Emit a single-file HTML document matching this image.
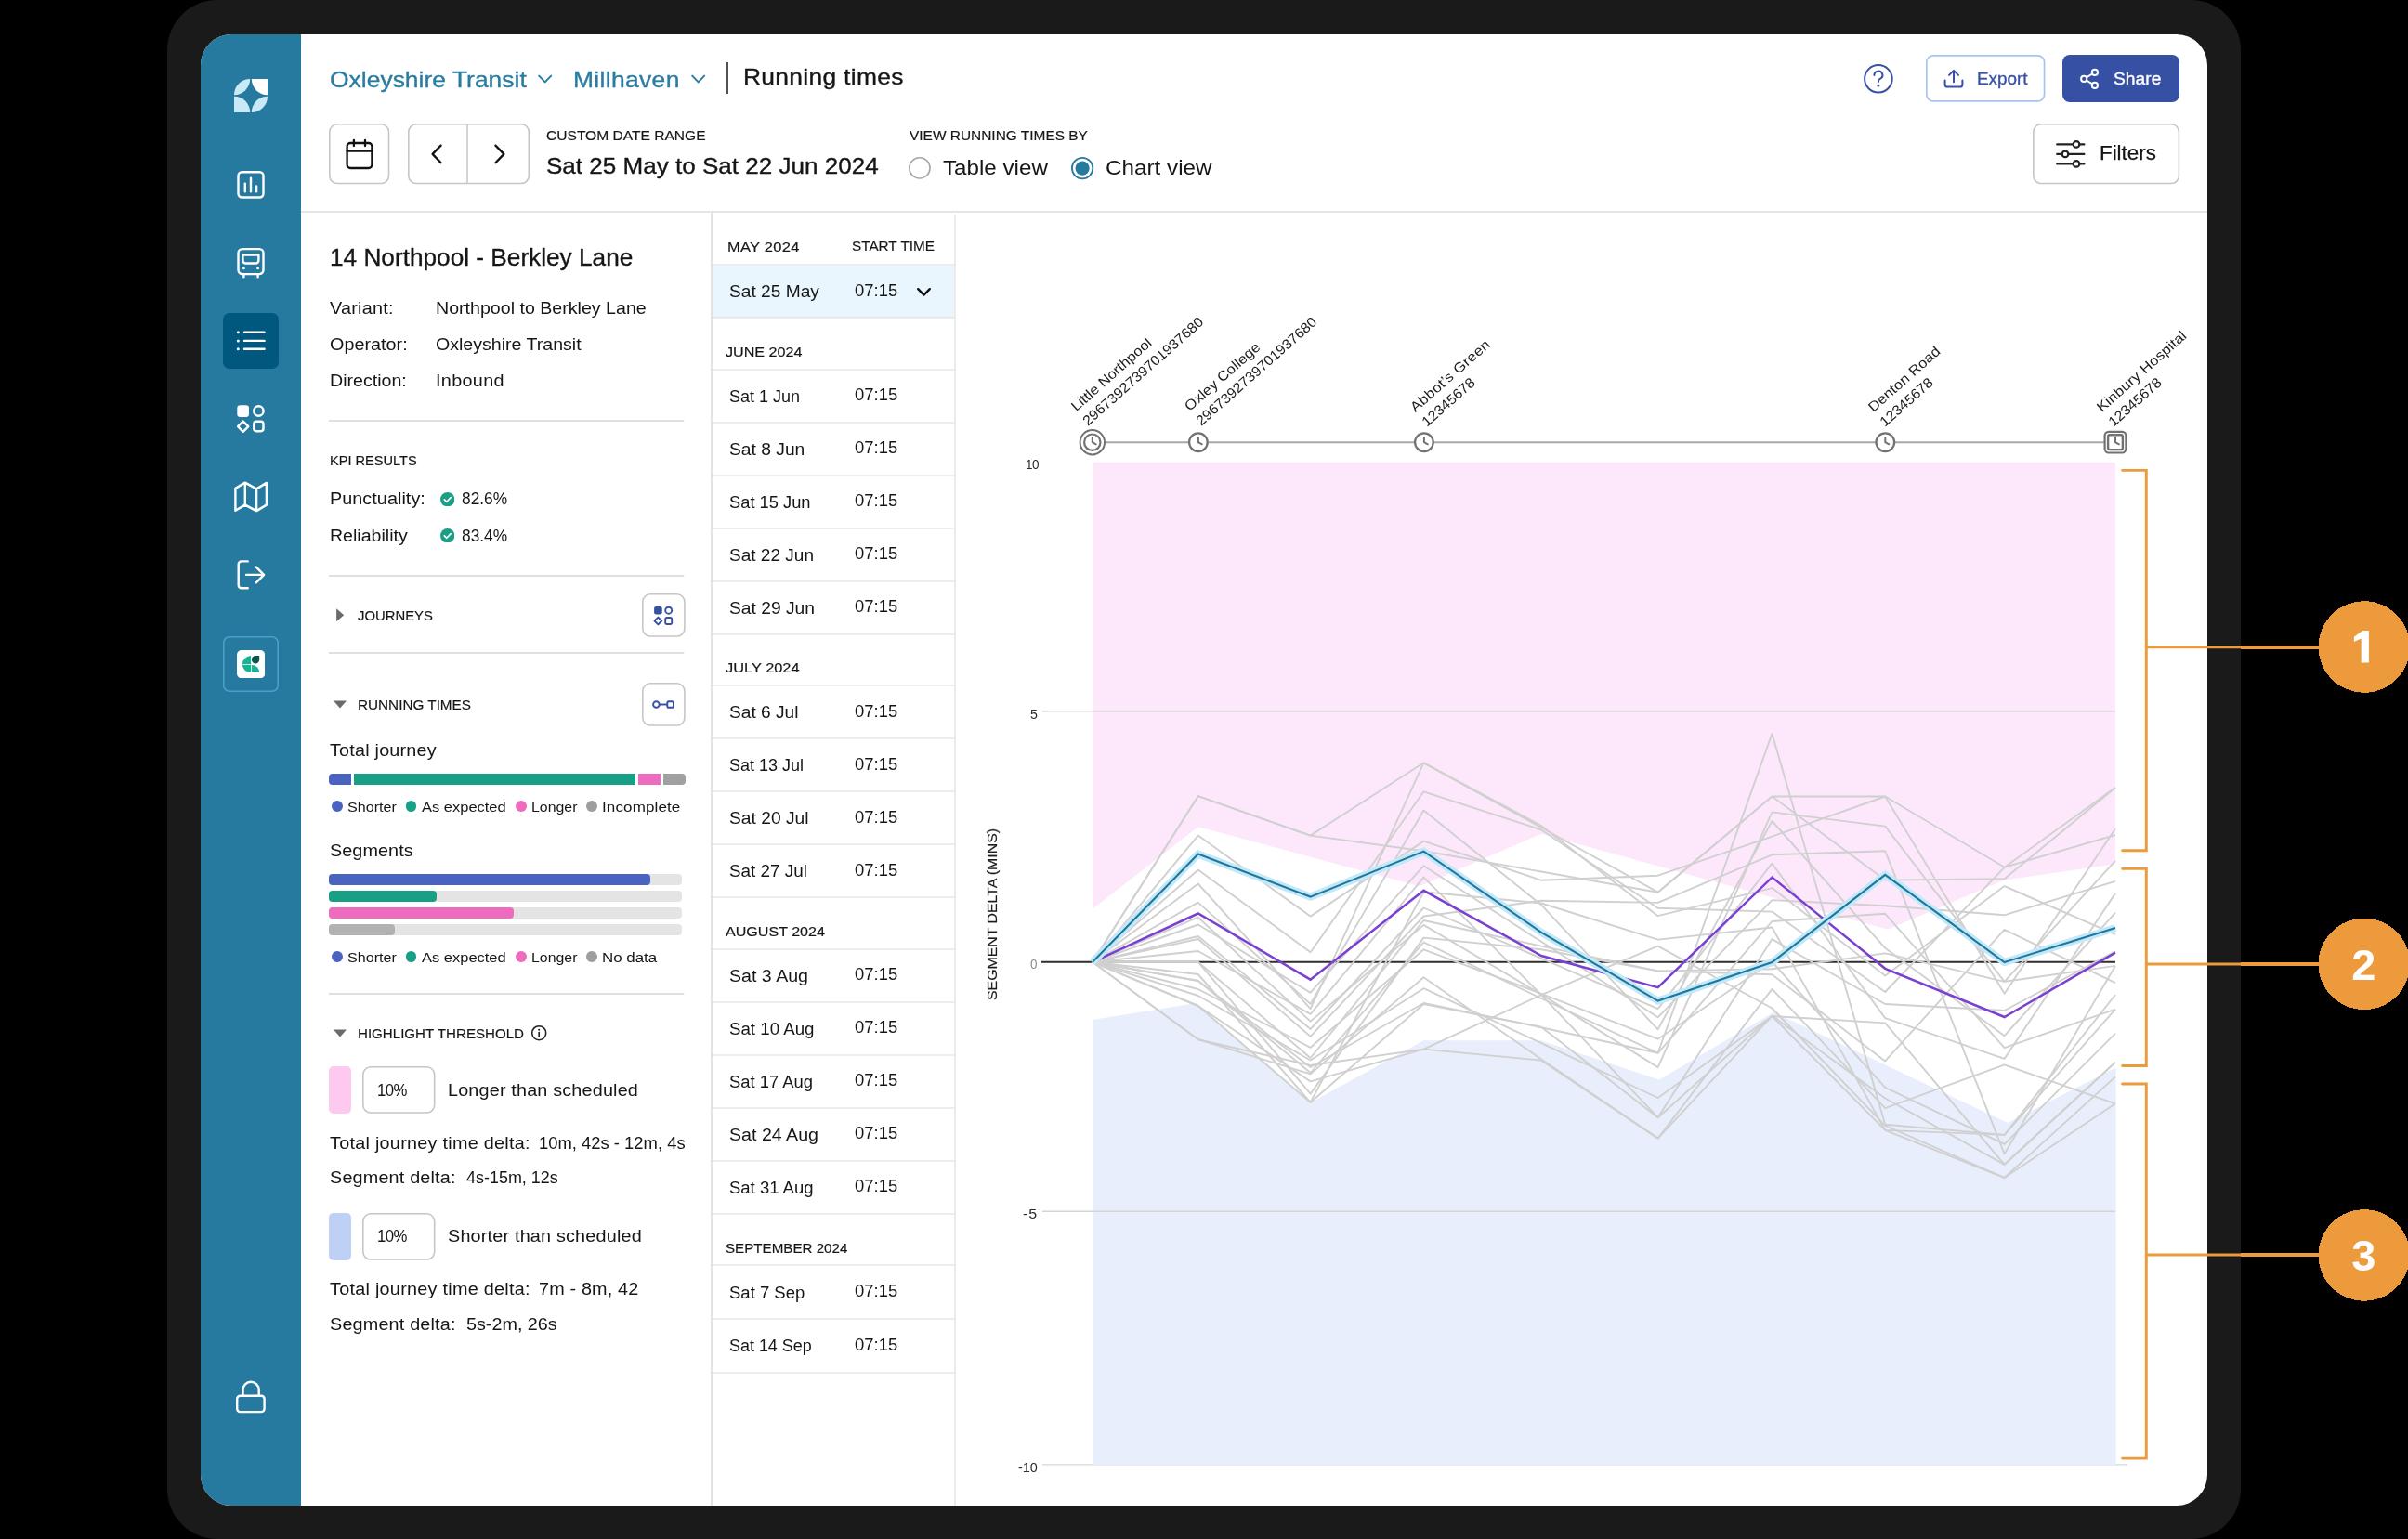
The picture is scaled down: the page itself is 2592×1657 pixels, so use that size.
<!DOCTYPE html>
<html><head><meta charset="utf-8"><title>Running times</title>
<style>
html,body{margin:0;padding:0;}
body{width:2592px;height:1657px;background:#000;position:relative;overflow:hidden;font-family:"Liberation Sans",sans-serif;}
.b{position:absolute;box-sizing:border-box;}
.t{position:absolute;white-space:nowrap;transform-origin:0 50%;}
#frame{position:absolute;left:180px;top:0;width:2231.5px;height:1657px;background:#1a1a1a;border-radius:54px;}
#screen{position:absolute;left:216px;top:36.5px;width:2160px;height:1584.3px;background:#fff;border-radius:33px;overflow:hidden;}
#pg{position:absolute;left:-216px;top:-36.5px;width:2592px;height:1657px;will-change:transform;}
#anno{position:absolute;left:0;top:0;width:2592px;height:1657px;}
</style></head><body>
<div id="frame"></div>
<div id="screen"><div id="pg">

<div class="b" style="left:216.00px;top:36.00px;width:108.00px;height:1586.00px;background:#277a9f;"></div>
<svg class="b" style="left:252.00px;top:85.00px;" width="36" height="36" viewBox="0 0 36 36">
<path d="M0 17.2 A17.2 17.2 0 0 1 17.2 0 A17.2 17.2 0 0 1 0 17.2Z" fill="#c8e9f8"/>
<path d="M18.8 0 H36 V17.2 A17.2 17.2 0 0 1 18.8 0Z" fill="#ffffff"/>
<path d="M0 18.8 A17.2 17.2 0 0 1 17.2 36 H0Z" fill="#c8e9f8"/>
<path d="M36 18.8 A17.2 17.2 0 0 1 18.8 36 A17.2 17.2 0 0 1 36 18.8Z" fill="#c8e9f8"/>
</svg>
<svg class="b" style="left:250.00px;top:180.00px;" width="40" height="40" viewBox="0 0 40 40">
<rect x="6.5" y="5.3" width="27" height="27.2" rx="4" stroke="#fff" fill="none" stroke-width="2.4" stroke-linecap="round" stroke-linejoin="round"/>
<path d="M13.8 17.6V26.2 M20 11.6V26.2 M26.1 20.5V26.2" stroke="#fff" fill="none" stroke-width="2.4" stroke-linecap="round" stroke-linejoin="round"/>
</svg>
<svg class="b" style="left:250.00px;top:262.00px;" width="40" height="42" viewBox="0 0 40 42">
<rect x="6.5" y="6.1" width="27" height="27" rx="4.5" stroke="#fff" fill="none" stroke-width="2.4" stroke-linecap="round" stroke-linejoin="round"/>
<path d="M11.4 12.5H28.4V18.5A3 3 0 0 1 25.4 21.5H14.4A3 3 0 0 1 11.4 18.5Z" stroke="#fff" fill="none" stroke-width="2.4" stroke-linecap="round" stroke-linejoin="round"/>
<path d="M12.4 33.5V36.2 M27.6 33.5V36.2" stroke="#fff" fill="none" stroke-width="2.4" stroke-linecap="round" stroke-linejoin="round"/>
<circle cx="12.4" cy="26.9" r="1.4" fill="#fff"/><circle cx="27.6" cy="26.9" r="1.4" fill="#fff"/>
</svg>
<div class="b" style="left:240.10px;top:336.80px;width:60.00px;height:60.20px;background:#00587f;border-radius:7px;"></div>
<svg class="b" style="left:250.00px;top:346.00px;" width="40" height="40" viewBox="0 0 40 40">
<path d="M13 11.8H34.6 M13 20.9H34.6 M13 29.8H34.6" stroke="#fff" fill="none" stroke-width="2.4" stroke-linecap="round" stroke-linejoin="round"/>
<circle cx="6.3" cy="11.8" r="1.5" fill="#fff"/><circle cx="6.3" cy="20.9" r="1.5" fill="#fff"/><circle cx="6.3" cy="29.8" r="1.5" fill="#fff"/>
</svg>
<svg class="b" style="left:250.00px;top:431.00px;" width="40" height="40" viewBox="0 0 40 40">
<rect x="5.3" y="5.2" width="12.7" height="12.7" rx="3.2" fill="#fff"/>
<circle cx="28.4" cy="11.5" r="5.2" stroke="#fff" fill="none" stroke-width="2.4" stroke-linecap="round" stroke-linejoin="round"/>
<path d="M11.7 22.6L17.3 28.2L11.7 33.8L6.1 28.2Z" stroke="#fff" fill="none" stroke-width="2.4" stroke-linecap="round" stroke-linejoin="round"/>
<rect x="23.3" y="22.8" width="10.2" height="10.4" rx="2.6" stroke="#fff" fill="none" stroke-width="2.4" stroke-linecap="round" stroke-linejoin="round"/>
</svg>
<svg class="b" style="left:248.00px;top:514.00px;" width="44" height="42" viewBox="0 0 44 42">
<path d="M5.4 11.9L15.8 5.6L28.1 12.4L38.9 5.9V29.6L28.1 36.1L15.8 29.6L5.4 35.8Z M15.8 5.6V29.6 M28.1 12.4V36.1" stroke="#fff" fill="none" stroke-width="2.4" stroke-linecap="round" stroke-linejoin="round"/>
</svg>
<svg class="b" style="left:250.00px;top:599.00px;" width="40" height="40" viewBox="0 0 40 40">
<path d="M16.7 5.4H9.9A3.2 3.2 0 0 0 6.7 8.6V31.1A3.2 3.2 0 0 0 9.9 34.3H16.7" stroke="#fff" fill="none" stroke-width="2.4" stroke-linecap="round" stroke-linejoin="round"/>
<path d="M15.1 19.9H34 M25.8 11.6L34.1 19.9L25.8 28.3" stroke="#fff" fill="none" stroke-width="2.4" stroke-linecap="round" stroke-linejoin="round"/>
</svg>
<svg class="b" style="left:238.10px;top:683.00px;" width="64.00" height="64.00"><rect x="2.80" y="2.80" width="58.40" height="58.40" rx="6.20" fill="none" stroke="#4b9fc9" stroke-width="1.6"/></svg>
<svg class="b" style="left:255.00px;top:699.70px;" width="30.2" height="30.3" viewBox="0 0 30.2 30.3">
<rect x="0" y="0" width="30.2" height="30.3" rx="5" fill="#fff"/>
<path d="M15.1 6.1 V15.2 H5.9 A9.2 9.1 0 0 1 15.1 6.1Z" fill="#19b394"/>
<path d="M5.9 16.0 H15.1 V24 A9.2 8.4 0 0 1 5.9 16.0Z" fill="#19b394"/>
<path d="M15.9 16.0 A8.3 8.0 0 0 1 24.2 24 H15.9Z" fill="#19b394"/>
<path d="M24.2 6.1 V10.2 A4.15 4.15 0 1 1 20.05 6.1Z" fill="#075848"/>
</svg>
<svg class="b" style="left:250.00px;top:1482.00px;" width="40" height="44" viewBox="0 0 40 44">
<rect x="5.2" y="20.7" width="29.4" height="17.4" rx="3.4" stroke="#fff" fill="none" stroke-width="2.4" stroke-linecap="round" stroke-linejoin="round"/>
<path d="M11.5 20.7V14.4A8.6 8.6 0 0 1 28.7 14.4V20.7" stroke="#fff" fill="none" stroke-width="2.4" stroke-linecap="round" stroke-linejoin="round"/>
</svg>
<div class="t" style="left:354.90px;top:73.98px;font-size:24px;line-height:24px;color:#2a7ca1;-webkit-text-stroke:0.35px #2a7ca1;letter-spacing:0.027px;transform:scaleX(1.1000);">Oxleyshire Transit</div>
<svg class="b" style="left:576.00px;top:77.00px;" width="22" height="16" viewBox="0 0 22 16"><path d="M4.2 4.6L10.7 11.4L17.2 4.6" stroke="#2a7ca1" stroke-width="2" fill="none" stroke-linecap="round" stroke-linejoin="round"/></svg>
<div class="t" style="left:617.00px;top:73.98px;font-size:24px;line-height:24px;color:#2a7ca1;-webkit-text-stroke:0.35px #2a7ca1;letter-spacing:0.321px;transform:scaleX(1.1000);">Millhaven</div>
<svg class="b" style="left:741.00px;top:77.00px;" width="22" height="16" viewBox="0 0 22 16"><path d="M4.2 4.6L10.7 11.4L17.2 4.6" stroke="#2a7ca1" stroke-width="2" fill="none" stroke-linecap="round" stroke-linejoin="round"/></svg>
<svg class="b" style="left:780.50px;top:66.90px;" width="4" height="34.20"><path d="M2 0V34.20" stroke="#333" stroke-width="1.7"/></svg>
<div class="t" style="left:800.40px;top:71.48px;font-size:24px;line-height:24px;color:#161616;-webkit-text-stroke:0.35px #161616;letter-spacing:0.276px;transform:scaleX(1.1000);">Running times</div>
<svg class="b" style="left:2004.00px;top:67.00px;" width="36" height="36" viewBox="0 0 36 36">
<circle cx="17.9" cy="17.8" r="14.8" stroke="#3650a4" stroke-width="2" fill="none"/>
<path d="M13.4 13.9A4.5 4.3 0 1 1 19.6 17.9C18.3 18.6 17.9 19.3 17.9 20.9" stroke="#3650a4" stroke-width="2" fill="none" stroke-linecap="round"/>
<circle cx="17.9" cy="25.2" r="1.4" fill="#3650a4"/>
</svg>
<svg class="b" style="left:2071.30px;top:57.40px;" width="132.40" height="54.80"><rect x="2.85" y="2.85" width="126.70" height="49.10" rx="7.15" fill="#fff" stroke="#a6c3f1" stroke-width="1.7"/></svg>
<svg class="b" style="left:2090.00px;top:72.00px;" width="26" height="26" viewBox="0 0 26 26">
<path d="M3.6 14.6V18.9A2.6 2.6 0 0 0 6.2 21.5H19.8A2.6 2.6 0 0 0 22.4 18.9V14.6" stroke="#3650a4" stroke-width="2" fill="none" stroke-linecap="round" stroke-linejoin="round"/>
<path d="M13 16.2V4.2 M8 8.9L13 3.9L18 8.9" stroke="#3650a4" stroke-width="2" fill="none" stroke-linecap="round" stroke-linejoin="round"/>
</svg>
<div class="t" style="left:2128.40px;top:75.02px;font-size:19px;line-height:19px;color:#3650a4;-webkit-text-stroke:0.35px #3650a4;transform:scaleX(0.9943);">Export</div>
<div class="b" style="left:2220.00px;top:59.40px;width:126.20px;height:50.80px;background:#3650a4;border-radius:8px;"></div>
<svg class="b" style="left:2237.00px;top:72.00px;" width="26" height="26" viewBox="0 0 26 26">
<circle cx="17.9" cy="5.9" r="3.1" stroke="#fff" stroke-width="2" fill="none"/>
<circle cx="6.2" cy="12.9" r="3.1" stroke="#fff" stroke-width="2" fill="none"/>
<circle cx="17.9" cy="19.9" r="3.1" stroke="#fff" stroke-width="2" fill="none"/>
<path d="M8.9 11.3L15.2 7.5 M8.9 14.5L15.2 18.3" stroke="#fff" stroke-width="2" fill="none"/>
</svg>
<div class="t" style="left:2275.40px;top:75.02px;font-size:19px;line-height:19px;color:#fff;-webkit-text-stroke:0.35px #fff;transform:scaleX(1.0137);">Share</div>
<svg class="b" style="left:352.40px;top:131.20px;" width="69.30" height="69.30"><rect x="2.80" y="2.80" width="63.70" height="63.70" rx="8.20" fill="#fff" stroke="#c6c6c6" stroke-width="1.6"/></svg>
<svg class="b" style="left:370.00px;top:148.00px;" width="34" height="36" viewBox="0 0 34 36">
<rect x="3.6" y="6.0" width="26.8" height="27.0" rx="3.6" stroke="#111" stroke-width="2.3" fill="none"/>
<path d="M3.6 14.7H30.4 M10.9 2.9V9.0 M23.0 2.9V9.0" stroke="#111" stroke-width="2.3" fill="none" stroke-linecap="round"/>
</svg>
<svg class="b" style="left:436.60px;top:131.20px;" width="135.10" height="69.30"><rect x="2.80" y="2.80" width="129.50" height="63.70" rx="8.20" fill="#fff" stroke="#c6c6c6" stroke-width="1.6"/></svg>
<svg class="b" style="left:501.40px;top:134.00px;" width="4" height="63.70"><path d="M2 0V63.70" stroke="#c6c6c6" stroke-width="1.5"/></svg>
<svg class="b" style="left:458.00px;top:151.00px;" width="26" height="30" viewBox="0 0 26 30"><path d="M16.6 5.6L7.6 14.9L16.6 24.2" stroke="#111" stroke-width="2.3" fill="none" stroke-linecap="round" stroke-linejoin="round"/></svg>
<svg class="b" style="left:524.00px;top:151.00px;" width="26" height="30" viewBox="0 0 26 30"><path d="M9.4 5.6L18.4 14.9L9.4 24.2" stroke="#111" stroke-width="2.3" fill="none" stroke-linecap="round" stroke-linejoin="round"/></svg>
<div class="t" style="left:588.00px;top:138.40px;font-size:15px;line-height:15px;color:#161616;-webkit-text-stroke:0.18px #161616;transform:scaleX(1.0381);">CUSTOM DATE RANGE</div>
<div class="t" style="left:588.00px;top:166.68px;font-size:24px;line-height:24px;color:#161616;-webkit-text-stroke:0.35px #161616;transform:scaleX(1.0854);">Sat 25 May to Sat 22 Jun 2024</div>
<div class="t" style="left:978.60px;top:138.40px;font-size:15px;line-height:15px;color:#161616;-webkit-text-stroke:0.18px #161616;transform:scaleX(1.0294);">VIEW RUNNING TIMES BY</div>
<svg class="b" style="left:976.00px;top:166.90px;" width="27.80" height="27.80"><rect x="2.80" y="2.80" width="22.20" height="22.20" rx="11.10" fill="#fff" stroke="#a6a6a6" stroke-width="1.6"/></svg>
<div class="t" style="left:1014.70px;top:169.88px;font-size:22px;line-height:22px;color:#161616;transform:scaleX(1.0991);">Table view</div>
<svg class="b" style="left:1151.30px;top:166.70px;" width="28.20" height="28.20"><rect x="2.90" y="2.90" width="22.40" height="22.40" rx="11.20" fill="#fff" stroke="#277a9f" stroke-width="1.8"/></svg>
<svg class="b" style="left:1153.30px;top:168.70px;" width="24.2" height="24.2" viewBox="0 0 24.2 24.2"><circle cx="12.1" cy="12.1" r="7.6" fill="#277a9f"/></svg>
<div class="t" style="left:1189.90px;top:169.88px;font-size:22px;line-height:22px;color:#161616;letter-spacing:0.026px;transform:scaleX(1.1000);">Chart view</div>
<svg class="b" style="left:2185.50px;top:131.20px;" width="162.20" height="69.30"><rect x="2.80" y="2.80" width="156.60" height="63.70" rx="8.20" fill="#fff" stroke="#c6c6c6" stroke-width="1.6"/></svg>
<svg class="b" style="left:2210.00px;top:148.00px;" width="38" height="36" viewBox="0 0 38 36">
<path d="M4.2 7.4H21.6 M28.4 7.4H33.4 M4.2 17.9H9.6 M16.4 17.9H33.4 M4.2 28.4H21.6 M28.4 28.4H33.4" stroke="#222" stroke-width="2.2" fill="none" stroke-linecap="round"/>
<circle cx="25" cy="7.4" r="3.3" stroke="#222" stroke-width="2.2" fill="none"/>
<circle cx="13" cy="17.9" r="3.3" stroke="#222" stroke-width="2.2" fill="none"/>
<circle cx="25" cy="28.4" r="3.3" stroke="#222" stroke-width="2.2" fill="none"/>
</svg>
<div class="t" style="left:2260.00px;top:153.88px;font-size:22px;line-height:22px;color:#161616;-webkit-text-stroke:0.25px #161616;transform:scaleX(1.0152);">Filters</div>
<svg class="b" style="left:324.00px;top:226.40px;" width="2052.00" height="4"><path d="M0 2H2052.00" stroke="#dcdcdc" stroke-width="1.4"/></svg>
<svg class="b" style="left:764.00px;top:229.00px;" width="4" height="1392.00"><path d="M2 0V1392.00" stroke="#cccccc" stroke-width="1.1"/></svg>
<svg class="b" style="left:1025.50px;top:230.80px;" width="4" height="1391.00"><path d="M2 0V1391.00" stroke="#dadada" stroke-width="1.1"/></svg>
<div class="t" style="left:354.70px;top:264.51px;font-size:25.5px;line-height:25.5px;color:#161616;-webkit-text-stroke:0.35px #161616;transform:scaleX(1.0276);">14 Northpool - Berkley Lane</div>
<div class="t" style="left:354.70px;top:323.16px;font-size:18px;line-height:18px;color:#161616;letter-spacing:0.219px;transform:scaleX(1.1000);">Variant:</div>
<div class="t" style="left:468.70px;top:323.16px;font-size:18px;line-height:18px;color:#161616;transform:scaleX(1.0892);">Northpool to Berkley Lane</div>
<div class="t" style="left:354.70px;top:362.36px;font-size:18px;line-height:18px;color:#161616;letter-spacing:0.006px;transform:scaleX(1.1000);">Operator:</div>
<div class="t" style="left:468.70px;top:362.36px;font-size:18px;line-height:18px;color:#161616;transform:scaleX(1.0871);">Oxleyshire Transit</div>
<div class="t" style="left:354.70px;top:401.26px;font-size:18px;line-height:18px;color:#161616;transform:scaleX(1.0891);">Direction:</div>
<div class="t" style="left:468.70px;top:401.26px;font-size:18px;line-height:18px;color:#161616;letter-spacing:0.289px;transform:scaleX(1.1000);">Inbound</div>
<svg class="b" style="left:354.30px;top:451.00px;" width="382.30" height="4"><path d="M0 2H382.30" stroke="#d6d6d6" stroke-width="1.4"/></svg>
<div class="t" style="left:354.70px;top:487.50px;font-size:15px;line-height:15px;color:#161616;-webkit-text-stroke:0.18px #161616;transform:scaleX(0.9708);">KPI RESULTS</div>
<div class="t" style="left:354.70px;top:528.46px;font-size:18px;line-height:18px;color:#161616;letter-spacing:0.041px;transform:scaleX(1.1000);">Punctuality:</div>
<svg class="b" style="left:473.90px;top:530.00px;" width="15.4" height="15.4" viewBox="0 0 15.4 15.4"><circle cx="7.7" cy="7.7" r="7.7" fill="#1a9f85"/><path d="M4.3 7.9L6.8 10.3L11.2 5.6" stroke="#fff" stroke-width="1.7" fill="none" stroke-linecap="round" stroke-linejoin="round"/></svg>
<div class="t" style="left:497.30px;top:528.46px;font-size:18px;line-height:18px;color:#161616;transform:scaleX(0.9620);">82.6%</div>
<div class="t" style="left:354.70px;top:567.76px;font-size:18px;line-height:18px;color:#161616;transform:scaleX(1.0866);">Reliability</div>
<svg class="b" style="left:473.90px;top:569.10px;" width="15.4" height="15.4" viewBox="0 0 15.4 15.4"><circle cx="7.7" cy="7.7" r="7.7" fill="#1a9f85"/><path d="M4.3 7.9L6.8 10.3L11.2 5.6" stroke="#fff" stroke-width="1.7" fill="none" stroke-linecap="round" stroke-linejoin="round"/></svg>
<div class="t" style="left:497.30px;top:567.76px;font-size:18px;line-height:18px;color:#161616;transform:scaleX(0.9620);">83.4%</div>
<svg class="b" style="left:354.30px;top:617.80px;" width="382.30" height="4"><path d="M0 2H382.30" stroke="#d6d6d6" stroke-width="1.4"/></svg>
<svg class="b" style="left:360.00px;top:653.00px;" width="14" height="20" viewBox="0 0 14 20"><path d="M2.1 2.3L10.2 9.3L2.1 16.3Z" fill="#6b6b6b"/></svg>
<div class="t" style="left:384.60px;top:655.30px;font-size:15px;line-height:15px;color:#161616;-webkit-text-stroke:0.18px #161616;transform:scaleX(0.9904);">JOURNEYS</div>
<svg class="b" style="left:688.70px;top:637.00px;" width="50.70" height="50.80"><rect x="2.80" y="2.80" width="45.10" height="45.20" rx="8.20" fill="#fff" stroke="#c6c6c6" stroke-width="1.6"/></svg>
<svg class="b" style="left:702.00px;top:651.00px;" width="24" height="24" viewBox="0 0 24 24">
<rect x="2.1" y="1.9" width="8.6" height="8.6" rx="2.2" fill="#3650a4"/>
<circle cx="17.7" cy="6.2" r="3.5" stroke="#3650a4" fill="none" stroke-width="1.9" stroke-linejoin="round"/>
<path d="M6.4 13.6L10.3 17.5L6.4 21.4L2.5 17.5Z" stroke="#3650a4" fill="none" stroke-width="1.9" stroke-linejoin="round"/>
<rect x="14.2" y="14" width="7" height="7" rx="1.8" stroke="#3650a4" fill="none" stroke-width="1.9" stroke-linejoin="round"/>
</svg>
<svg class="b" style="left:354.30px;top:701.40px;" width="382.30" height="4"><path d="M0 2H382.30" stroke="#d6d6d6" stroke-width="1.4"/></svg>
<svg class="b" style="left:357.00px;top:752.00px;" width="18" height="14" viewBox="0 0 18 14"><path d="M2 2.6H16L9 10.6Z" fill="#6b6b6b"/></svg>
<div class="t" style="left:384.60px;top:751.40px;font-size:15px;line-height:15px;color:#161616;-webkit-text-stroke:0.18px #161616;transform:scaleX(1.0189);">RUNNING TIMES</div>
<svg class="b" style="left:688.70px;top:733.00px;" width="50.70" height="50.80"><rect x="2.80" y="2.80" width="45.10" height="45.20" rx="8.20" fill="#fff" stroke="#c6c6c6" stroke-width="1.6"/></svg>
<svg class="b" style="left:700.00px;top:748.00px;" width="28" height="22" viewBox="0 0 28 22">
<circle cx="6.4" cy="10.5" r="3.3" stroke="#3650a4" fill="none" stroke-width="1.9" stroke-linejoin="round"/>
<path d="M9.7 10.5H18.3" stroke="#3650a4" fill="none" stroke-width="1.9" stroke-linejoin="round"/>
<rect x="18.3" y="7.2" width="6.6" height="6.6" rx="1.6" stroke="#3650a4" fill="none" stroke-width="1.9" stroke-linejoin="round"/>
</svg>
<div class="t" style="left:354.70px;top:798.76px;font-size:18px;line-height:18px;color:#161616;letter-spacing:0.184px;transform:scaleX(1.1000);">Total journey</div>
<div class="b" style="left:353.90px;top:833.20px;width:24.10px;height:12.00px;background:#4a63c0;border-radius:4px 0 0 4px;"></div>
<div class="b" style="left:381.00px;top:833.20px;width:302.80px;height:12.00px;background:#17a086;"></div>
<div class="b" style="left:686.90px;top:833.20px;width:24.00px;height:12.00px;background:#ee6bbd;"></div>
<div class="b" style="left:714.00px;top:833.20px;width:24.00px;height:12.00px;background:#a0a0a0;border-radius:0 4px 4px 0;"></div>
<div class="b" style="left:357.10px;top:862.30px;width:11.80px;height:11.80px;background:#4a63c0;border-radius:50%;"></div>
<div class="t" style="left:373.90px;top:861.08px;font-size:15.5px;line-height:15.5px;color:#161616;transform:scaleX(1.0407);">Shorter</div>
<div class="b" style="left:436.50px;top:862.30px;width:11.80px;height:11.80px;background:#17a086;border-radius:50%;"></div>
<div class="t" style="left:453.70px;top:861.08px;font-size:15.5px;line-height:15.5px;color:#161616;transform:scaleX(1.0632);">As expected</div>
<div class="b" style="left:555.20px;top:862.30px;width:11.80px;height:11.80px;background:#ee6bbd;border-radius:50%;"></div>
<div class="t" style="left:572.00px;top:861.08px;font-size:15.5px;line-height:15.5px;color:#161616;transform:scaleX(1.0256);">Longer</div>
<div class="b" style="left:631.40px;top:862.30px;width:11.80px;height:11.80px;background:#9e9e9e;border-radius:50%;"></div>
<div class="t" style="left:648.30px;top:861.08px;font-size:15.5px;line-height:15.5px;color:#161616;letter-spacing:0.091px;transform:scaleX(1.1000);">Incomplete</div>
<div class="t" style="left:354.70px;top:906.56px;font-size:18px;line-height:18px;color:#161616;letter-spacing:0.062px;transform:scaleX(1.1000);">Segments</div>
<div class="b" style="left:353.90px;top:941.20px;width:379.80px;height:12.00px;background:#e4e4e4;border-radius:4px;"></div>
<div class="b" style="left:353.90px;top:941.20px;width:346.50px;height:12.00px;background:#4a63c0;border-radius:4px;"></div>
<div class="b" style="left:353.90px;top:959.20px;width:379.80px;height:12.00px;background:#e4e4e4;border-radius:4px;"></div>
<div class="b" style="left:353.90px;top:959.20px;width:115.70px;height:12.00px;background:#17a086;border-radius:4px;"></div>
<div class="b" style="left:353.90px;top:977.20px;width:379.80px;height:12.00px;background:#e4e4e4;border-radius:4px;"></div>
<div class="b" style="left:353.90px;top:977.20px;width:199.60px;height:12.00px;background:#ee6bbd;border-radius:4px;"></div>
<div class="b" style="left:353.90px;top:995.20px;width:379.80px;height:12.00px;background:#e4e4e4;border-radius:4px;"></div>
<div class="b" style="left:353.90px;top:995.20px;width:70.70px;height:12.00px;background:#b2b2b2;border-radius:4px;"></div>
<div class="b" style="left:357.10px;top:1024.00px;width:11.80px;height:11.80px;background:#4a63c0;border-radius:50%;"></div>
<div class="t" style="left:373.90px;top:1022.78px;font-size:15.5px;line-height:15.5px;color:#161616;transform:scaleX(1.0407);">Shorter</div>
<div class="b" style="left:436.50px;top:1024.00px;width:11.80px;height:11.80px;background:#17a086;border-radius:50%;"></div>
<div class="t" style="left:453.70px;top:1022.78px;font-size:15.5px;line-height:15.5px;color:#161616;transform:scaleX(1.0632);">As expected</div>
<div class="b" style="left:555.20px;top:1024.00px;width:11.80px;height:11.80px;background:#ee6bbd;border-radius:50%;"></div>
<div class="t" style="left:572.00px;top:1022.78px;font-size:15.5px;line-height:15.5px;color:#161616;transform:scaleX(1.0256);">Longer</div>
<div class="b" style="left:631.40px;top:1024.00px;width:11.80px;height:11.80px;background:#9e9e9e;border-radius:50%;"></div>
<div class="t" style="left:648.30px;top:1022.78px;font-size:15.5px;line-height:15.5px;color:#161616;transform:scaleX(1.0905);">No data</div>
<svg class="b" style="left:354.30px;top:1067.50px;" width="382.30" height="4"><path d="M0 2H382.30" stroke="#d6d6d6" stroke-width="1.4"/></svg>
<svg class="b" style="left:357.00px;top:1106.00px;" width="18" height="14" viewBox="0 0 18 14"><path d="M2 2.6H16L9 10.6Z" fill="#6b6b6b"/></svg>
<div class="t" style="left:384.60px;top:1105.40px;font-size:15px;line-height:15px;color:#161616;-webkit-text-stroke:0.18px #161616;transform:scaleX(1.0067);">HIGHLIGHT THRESHOLD</div>
<svg class="b" style="left:571.40px;top:1103.30px;" width="18.4" height="18.4" viewBox="0 0 18.4 18.4">
<circle cx="9.2" cy="9.2" r="7.5" stroke="#222" stroke-width="1.6" fill="none"/>
<path d="M9.2 8.6V12.9" stroke="#222" stroke-width="1.7" stroke-linecap="round"/>
<circle cx="9.2" cy="5.8" r="1.05" fill="#222"/>
</svg>
<div class="b" style="left:353.90px;top:1148.30px;width:24.10px;height:50.80px;background:#fdc9ef;border-radius:5px;"></div>
<svg class="b" style="left:388.40px;top:1146.30px;" width="82.50" height="54.80"><rect x="2.80" y="2.80" width="76.90" height="49.20" rx="8.20" fill="#fff" stroke="#c6c6c6" stroke-width="1.6"/></svg>
<div class="t" style="left:405.70px;top:1164.86px;font-size:18px;line-height:18px;color:#161616;letter-spacing:-0.550px;transform:scaleX(0.9300);">10%</div>
<div class="t" style="left:482.30px;top:1164.86px;font-size:18px;line-height:18px;color:#161616;letter-spacing:0.153px;transform:scaleX(1.1000);">Longer than scheduled</div>
<div class="t" style="left:354.70px;top:1221.86px;font-size:18px;line-height:18px;color:#161616;letter-spacing:0.243px;transform:scaleX(1.1000);">Total journey time delta:</div>
<div class="t" style="left:580.40px;top:1221.86px;font-size:18px;line-height:18px;color:#161616;transform:scaleX(1.0229);">10m, 42s - 12m, 4s</div>
<div class="t" style="left:354.70px;top:1259.26px;font-size:18px;line-height:18px;color:#161616;letter-spacing:0.157px;transform:scaleX(1.1000);">Segment delta:</div>
<div class="t" style="left:501.60px;top:1259.26px;font-size:18px;line-height:18px;color:#161616;transform:scaleX(0.9975);">4s-15m, 12s</div>
<div class="b" style="left:353.90px;top:1305.90px;width:24.10px;height:50.80px;background:#bfd0f6;border-radius:5px;"></div>
<svg class="b" style="left:388.40px;top:1303.90px;" width="82.50" height="54.80"><rect x="2.80" y="2.80" width="76.90" height="49.20" rx="8.20" fill="#fff" stroke="#c6c6c6" stroke-width="1.6"/></svg>
<div class="t" style="left:405.70px;top:1322.46px;font-size:18px;line-height:18px;color:#161616;letter-spacing:-0.550px;transform:scaleX(0.9300);">10%</div>
<div class="t" style="left:482.30px;top:1322.46px;font-size:18px;line-height:18px;color:#161616;letter-spacing:0.172px;transform:scaleX(1.1000);">Shorter than scheduled</div>
<div class="t" style="left:354.70px;top:1379.46px;font-size:18px;line-height:18px;color:#161616;letter-spacing:0.243px;transform:scaleX(1.1000);">Total journey time delta:</div>
<div class="t" style="left:580.40px;top:1379.46px;font-size:18px;line-height:18px;color:#161616;letter-spacing:0.146px;transform:scaleX(1.1000);">7m - 8m, 42</div>
<div class="t" style="left:354.70px;top:1416.86px;font-size:18px;line-height:18px;color:#161616;letter-spacing:0.157px;transform:scaleX(1.1000);">Segment delta:</div>
<div class="t" style="left:501.60px;top:1416.86px;font-size:18px;line-height:18px;color:#161616;transform:scaleX(1.0973);">5s-2m, 26s</div>
<div class="t" style="left:783.40px;top:258.10px;font-size:15px;line-height:15px;color:#161616;-webkit-text-stroke:0.18px #161616;letter-spacing:0.236px;transform:scaleX(1.1000);">MAY 2024</div>
<div class="t" style="left:917.10px;top:256.80px;font-size:15px;line-height:15px;color:#161616;-webkit-text-stroke:0.18px #161616;transform:scaleX(1.0190);">START TIME</div>
<svg class="b" style="left:766.00px;top:282.90px;" width="261.50" height="4"><path d="M0 2H261.50" stroke="#dcdcdc" stroke-width="1.1"/></svg>
<div class="b" style="left:766.80px;top:285.70px;width:260.00px;height:55.90px;background:#e9f6fd;"></div>
<svg class="b" style="left:766.00px;top:340.00px;" width="261.50" height="4"><path d="M0 2H261.50" stroke="#dcdcdc" stroke-width="1.1"/></svg>
<svg class="b" style="left:984.00px;top:306.00px;" width="22" height="18" viewBox="0 0 22 18"><path d="M4.2 5.2L10.5 11.6L16.8 5.2" stroke="#111" stroke-width="2.4" fill="none" stroke-linecap="round" stroke-linejoin="round"/></svg>
<div class="t" style="left:785.00px;top:305.06px;font-size:18px;line-height:18px;color:#161616;transform:scaleX(1.0643);">Sat 25 May</div>
<div class="t" style="left:919.90px;top:303.66px;font-size:18px;line-height:18px;color:#161616;transform:scaleX(1.0256);">07:15</div>
<div class="t" style="left:781.40px;top:370.80px;font-size:15px;line-height:15px;color:#161616;-webkit-text-stroke:0.18px #161616;transform:scaleX(1.0755);">JUNE 2024</div>
<svg class="b" style="left:766.00px;top:395.50px;" width="261.50" height="4"><path d="M0 2H261.50" stroke="#dcdcdc" stroke-width="1.1"/></svg>
<div class="t" style="left:785.00px;top:417.66px;font-size:18px;line-height:18px;color:#161616;">Sat 1 Jun</div>
<div class="t" style="left:919.90px;top:416.26px;font-size:18px;line-height:18px;color:#161616;transform:scaleX(1.0256);">07:15</div>
<svg class="b" style="left:766.00px;top:452.55px;" width="261.50" height="4"><path d="M0 2H261.50" stroke="#dcdcdc" stroke-width="1.1"/></svg>
<div class="t" style="left:785.00px;top:474.71px;font-size:18px;line-height:18px;color:#161616;transform:scaleX(1.0690);">Sat 8 Jun</div>
<div class="t" style="left:919.90px;top:473.31px;font-size:18px;line-height:18px;color:#161616;transform:scaleX(1.0256);">07:15</div>
<svg class="b" style="left:766.00px;top:509.60px;" width="261.50" height="4"><path d="M0 2H261.50" stroke="#dcdcdc" stroke-width="1.1"/></svg>
<div class="t" style="left:785.00px;top:531.76px;font-size:18px;line-height:18px;color:#161616;transform:scaleX(1.0167);">Sat 15 Jun</div>
<div class="t" style="left:919.90px;top:530.36px;font-size:18px;line-height:18px;color:#161616;transform:scaleX(1.0256);">07:15</div>
<svg class="b" style="left:766.00px;top:566.65px;" width="261.50" height="4"><path d="M0 2H261.50" stroke="#dcdcdc" stroke-width="1.1"/></svg>
<div class="t" style="left:785.00px;top:588.81px;font-size:18px;line-height:18px;color:#161616;transform:scaleX(1.0574);">Sat 22 Jun</div>
<div class="t" style="left:919.90px;top:587.41px;font-size:18px;line-height:18px;color:#161616;transform:scaleX(1.0256);">07:15</div>
<svg class="b" style="left:766.00px;top:623.70px;" width="261.50" height="4"><path d="M0 2H261.50" stroke="#dcdcdc" stroke-width="1.1"/></svg>
<div class="t" style="left:785.00px;top:645.86px;font-size:18px;line-height:18px;color:#161616;transform:scaleX(1.0690);">Sat 29 Jun</div>
<div class="t" style="left:919.90px;top:644.46px;font-size:18px;line-height:18px;color:#161616;transform:scaleX(1.0256);">07:15</div>
<svg class="b" style="left:766.00px;top:680.75px;" width="261.50" height="4"><path d="M0 2H261.50" stroke="#dcdcdc" stroke-width="1.1"/></svg>
<div class="t" style="left:781.40px;top:711.20px;font-size:15px;line-height:15px;color:#161616;-webkit-text-stroke:0.18px #161616;transform:scaleX(1.0929);">JULY 2024</div>
<svg class="b" style="left:766.00px;top:735.90px;" width="261.50" height="4"><path d="M0 2H261.50" stroke="#dcdcdc" stroke-width="1.1"/></svg>
<div class="t" style="left:785.00px;top:758.06px;font-size:18px;line-height:18px;color:#161616;transform:scaleX(1.0622);">Sat 6 Jul</div>
<div class="t" style="left:919.90px;top:756.66px;font-size:18px;line-height:18px;color:#161616;transform:scaleX(1.0256);">07:15</div>
<svg class="b" style="left:766.00px;top:792.95px;" width="261.50" height="4"><path d="M0 2H261.50" stroke="#dcdcdc" stroke-width="1.1"/></svg>
<div class="t" style="left:785.00px;top:815.11px;font-size:18px;line-height:18px;color:#161616;">Sat 13 Jul</div>
<div class="t" style="left:919.90px;top:813.71px;font-size:18px;line-height:18px;color:#161616;transform:scaleX(1.0256);">07:15</div>
<svg class="b" style="left:766.00px;top:850.00px;" width="261.50" height="4"><path d="M0 2H261.50" stroke="#dcdcdc" stroke-width="1.1"/></svg>
<div class="t" style="left:785.00px;top:872.16px;font-size:18px;line-height:18px;color:#161616;transform:scaleX(1.0681);">Sat 20 Jul</div>
<div class="t" style="left:919.90px;top:870.76px;font-size:18px;line-height:18px;color:#161616;transform:scaleX(1.0256);">07:15</div>
<svg class="b" style="left:766.00px;top:907.05px;" width="261.50" height="4"><path d="M0 2H261.50" stroke="#dcdcdc" stroke-width="1.1"/></svg>
<div class="t" style="left:785.00px;top:929.21px;font-size:18px;line-height:18px;color:#161616;transform:scaleX(1.0493);">Sat 27 Jul</div>
<div class="t" style="left:919.90px;top:927.81px;font-size:18px;line-height:18px;color:#161616;transform:scaleX(1.0256);">07:15</div>
<svg class="b" style="left:766.00px;top:964.10px;" width="261.50" height="4"><path d="M0 2H261.50" stroke="#dcdcdc" stroke-width="1.1"/></svg>
<div class="t" style="left:781.40px;top:994.80px;font-size:15px;line-height:15px;color:#161616;-webkit-text-stroke:0.18px #161616;transform:scaleX(1.0714);">AUGUST 2024</div>
<svg class="b" style="left:766.00px;top:1019.50px;" width="261.50" height="4"><path d="M0 2H261.50" stroke="#dcdcdc" stroke-width="1.1"/></svg>
<div class="t" style="left:785.00px;top:1041.66px;font-size:18px;line-height:18px;color:#161616;transform:scaleX(1.0888);">Sat 3 Aug</div>
<div class="t" style="left:919.90px;top:1040.26px;font-size:18px;line-height:18px;color:#161616;transform:scaleX(1.0256);">07:15</div>
<svg class="b" style="left:766.00px;top:1076.55px;" width="261.50" height="4"><path d="M0 2H261.50" stroke="#dcdcdc" stroke-width="1.1"/></svg>
<div class="t" style="left:785.00px;top:1098.71px;font-size:18px;line-height:18px;color:#161616;transform:scaleX(1.0389);">Sat 10 Aug</div>
<div class="t" style="left:919.90px;top:1097.31px;font-size:18px;line-height:18px;color:#161616;transform:scaleX(1.0256);">07:15</div>
<svg class="b" style="left:766.00px;top:1133.60px;" width="261.50" height="4"><path d="M0 2H261.50" stroke="#dcdcdc" stroke-width="1.1"/></svg>
<div class="t" style="left:785.00px;top:1155.76px;font-size:18px;line-height:18px;color:#161616;transform:scaleX(1.0218);">Sat 17 Aug</div>
<div class="t" style="left:919.90px;top:1154.36px;font-size:18px;line-height:18px;color:#161616;transform:scaleX(1.0256);">07:15</div>
<svg class="b" style="left:766.00px;top:1190.65px;" width="261.50" height="4"><path d="M0 2H261.50" stroke="#dcdcdc" stroke-width="1.1"/></svg>
<div class="t" style="left:785.00px;top:1212.81px;font-size:18px;line-height:18px;color:#161616;transform:scaleX(1.0899);">Sat 24 Aug</div>
<div class="t" style="left:919.90px;top:1211.41px;font-size:18px;line-height:18px;color:#161616;transform:scaleX(1.0256);">07:15</div>
<svg class="b" style="left:766.00px;top:1247.70px;" width="261.50" height="4"><path d="M0 2H261.50" stroke="#dcdcdc" stroke-width="1.1"/></svg>
<div class="t" style="left:785.00px;top:1269.86px;font-size:18px;line-height:18px;color:#161616;transform:scaleX(1.0275);">Sat 31 Aug</div>
<div class="t" style="left:919.90px;top:1268.46px;font-size:18px;line-height:18px;color:#161616;transform:scaleX(1.0256);">07:15</div>
<svg class="b" style="left:766.00px;top:1304.75px;" width="261.50" height="4"><path d="M0 2H261.50" stroke="#dcdcdc" stroke-width="1.1"/></svg>
<div class="t" style="left:781.40px;top:1335.70px;font-size:15px;line-height:15px;color:#161616;-webkit-text-stroke:0.18px #161616;transform:scaleX(1.0103);">SEPTEMBER 2024</div>
<svg class="b" style="left:766.00px;top:1360.40px;" width="261.50" height="4"><path d="M0 2H261.50" stroke="#dcdcdc" stroke-width="1.1"/></svg>
<div class="t" style="left:785.00px;top:1382.56px;font-size:18px;line-height:18px;color:#161616;transform:scaleX(1.0283);">Sat 7 Sep</div>
<div class="t" style="left:919.90px;top:1381.16px;font-size:18px;line-height:18px;color:#161616;transform:scaleX(1.0256);">07:15</div>
<svg class="b" style="left:766.00px;top:1418.00px;" width="261.50" height="4"><path d="M0 2H261.50" stroke="#dcdcdc" stroke-width="1.1"/></svg>
<div class="t" style="left:785.00px;top:1440.16px;font-size:18px;line-height:18px;color:#161616;transform:scaleX(0.9958);">Sat 14 Sep</div>
<div class="t" style="left:919.90px;top:1438.76px;font-size:18px;line-height:18px;color:#161616;transform:scaleX(1.0256);">07:15</div>
<svg class="b" style="left:766.00px;top:1475.60px;" width="261.50" height="4"><path d="M0 2H261.50" stroke="#dcdcdc" stroke-width="1.1"/></svg>
<svg class="b" style="left:0;top:0;" width="2592" height="1657" viewBox="0 0 2592 1657"><polygon points="1176,497.7 2277,497.7 2277,930.2 2157.6,947.6 2032,1000.8 1659.1,897.8 1528,954.2 1289.7,890.2 1176,978.8" fill="#fde8fb"/><path d="M1122 1576.9H2290" stroke="#d6d6d6" stroke-width="1.4" fill="none"/><polygon points="1176,1098.1 1287.6,1079.9 1411.2,1187 1532.5,1120.2 1658.4,1120.2 1786,1162.6 1909.3,1089.8 2161,1209 2277.6,1149.6 2277.6,1577.5 1176,1577.5" fill="#e8eefc"/><path d="M1122 765.9H2277 M1122 1304.2H2277" stroke="#d4d4d4" stroke-width="1.4" fill="none"/><path d="M1121 1035.8H2277" stroke="#2e2e2e" stroke-width="1.9" fill="none"/><polyline points="1176.0,1035.8 1289.7,857.2 1410.6,899.6 1532.5,916.2 1659.1,938.5 1784.6,960.7 1907.5,857.5 2029.2,947.6 2157.6,946.3 2277.0,848.1" fill="none" stroke="#d0d0d0" stroke-width="1.9" stroke-linejoin="round"/><polyline points="1176.0,1035.8 1289.7,899.6 1410.6,986.6 1532.5,905.6 1659.1,947.8 1784.6,942.7 1907.5,900.7 2029.2,857.5 2157.6,1069.8 2277.0,892.3" fill="none" stroke="#d0d0d0" stroke-width="1.9" stroke-linejoin="round"/><polyline points="1176.0,1035.8 1289.7,936.5 1410.6,1025.3 1532.5,852.3 1659.1,893.5 1784.6,977.8 1907.5,981.6 2029.2,1068.0 2157.6,933.8 2277.0,899.0" fill="none" stroke="#d0d0d0" stroke-width="1.9" stroke-linejoin="round"/><polyline points="1176.0,1035.8 1289.7,951.5 1410.6,1086.1 1532.5,821.3 1659.1,889.0 1784.6,986.2 1907.5,956.1 2029.2,1050.5 2157.6,954.1 2277.0,1006.1" fill="none" stroke="#d0d0d0" stroke-width="1.9" stroke-linejoin="round"/><polyline points="1176.0,1035.8 1289.7,971.6 1410.6,1080.9 1532.5,872.6 1659.1,974.3 1784.6,1108.3 1907.5,884.0 2029.2,1020.7 2157.6,1115.2 2277.0,982.7" fill="none" stroke="#d0d0d0" stroke-width="1.9" stroke-linejoin="round"/><polyline points="1176.0,1035.8 1289.7,987.7 1410.6,1099.6 1532.5,995.9 1659.1,1070.6 1784.6,1149.1 1907.5,874.4 2029.2,889.6 2157.6,1056.8 2277.0,926.8" fill="none" stroke="#d0d0d0" stroke-width="1.9" stroke-linejoin="round"/><polyline points="1176.0,1035.8 1289.7,995.5 1410.6,1068.7 1532.5,932.2 1659.1,1013.8 1784.6,1095.3 1907.5,969.1 2029.2,975.2 2157.6,985.3 2277.0,948.9" fill="none" stroke="#d0d0d0" stroke-width="1.9" stroke-linejoin="round"/><polyline points="1176.0,1035.8 1289.7,1008.0 1410.6,1108.0 1532.5,977.5 1659.1,1031.8 1784.6,1086.2 1907.5,929.7 2029.2,1096.1 2157.6,1139.9 2277.0,961.9" fill="none" stroke="#d0d0d0" stroke-width="1.9" stroke-linejoin="round"/><polyline points="1176.0,1035.8 1289.7,1011.0 1410.6,1115.9 1532.5,986.5 1659.1,969.8 1784.6,971.9 1907.5,920.3 2029.2,916.2 2157.6,1242.3 2277.0,1039.9" fill="none" stroke="#d0d0d0" stroke-width="1.9" stroke-linejoin="round"/><polyline points="1176.0,1035.8 1289.7,1024.0 1410.6,1091.8 1532.5,944.6 1659.1,1071.1 1784.6,1203.2 1907.5,1011.1 2029.2,1081.0 2157.6,1088.0 2277.0,1024.3" fill="none" stroke="#d0d0d0" stroke-width="1.9" stroke-linejoin="round"/><polyline points="1176.0,1035.8 1289.7,1035.8 1410.6,1177.6 1532.5,1009.6 1659.1,1022.2 1784.6,1045.4 1907.5,1049.2 2029.2,1142.4 2157.6,1000.9 2277.0,1058.1" fill="none" stroke="#d0d0d0" stroke-width="1.9" stroke-linejoin="round"/><polyline points="1176.0,1035.8 1289.7,1056.0 1410.6,1149.0 1532.5,1080.0 1659.1,1106.2 1784.6,1133.8 1907.5,992.0 2029.2,983.8 2157.6,1128.2 2277.0,1086.6" fill="none" stroke="#d0d0d0" stroke-width="1.9" stroke-linejoin="round"/><polyline points="1176.0,1035.8 1289.7,1049.0 1410.6,1186.8 1532.5,960.3 1659.1,972.5 1784.6,1011.6 1907.5,998.5 2029.2,1216.9 2157.6,1221.9 2277.0,1071.0" fill="none" stroke="#d0d0d0" stroke-width="1.9" stroke-linejoin="round"/><polyline points="1176.0,1035.8 1289.7,1065.0 1410.6,1127.8 1532.5,1022.3 1659.1,1069.8 1784.6,1118.7 1907.5,1035.5 2029.2,1170.9 2157.6,1231.9 2277.0,1112.6" fill="none" stroke="#d0d0d0" stroke-width="1.9" stroke-linejoin="round"/><polyline points="1176.0,1035.8 1289.7,1072.0 1410.6,1141.5 1532.5,1064.2 1659.1,1123.1 1784.6,1182.0 1907.5,1094.0 2029.2,1101.4 2157.6,1253.8 2277.0,1143.8" fill="none" stroke="#d0d0d0" stroke-width="1.9" stroke-linejoin="round"/><polyline points="1176.0,1035.8 1289.7,1119.0 1410.6,1156.4 1532.5,1052.3 1659.1,1140.5 1784.6,1225.6 1907.5,1064.9 2029.2,1193.1 2157.6,1146.4 2277.0,1188.3" fill="none" stroke="#d0d0d0" stroke-width="1.9" stroke-linejoin="round"/><polyline points="1176.0,1035.8 1289.7,1083.0 1410.6,1164.4 1532.5,1129.6 1659.1,1071.2 1784.6,1018.6 1907.5,1085.5 2029.2,1211.9 2157.6,1268.0 2277.0,1159.4" fill="none" stroke="#d0d0d0" stroke-width="1.9" stroke-linejoin="round"/><polyline points="1176.0,1035.8 1289.7,857.2 1410.6,899.6 1532.5,821.3 1659.1,891.0 1784.6,960.7 1907.5,857.5 2029.2,857.5 2157.6,933.8 2277.0,848.1" fill="none" stroke="#d0d0d0" stroke-width="1.9" stroke-linejoin="round"/><polyline points="1176.0,1035.8 1289.7,1056.0 1410.6,1155.0 1532.5,1014.5 1659.1,1075.0 1784.6,1133.8 1907.5,789.9 2029.2,1210.7 2157.6,1221.9 2277.0,1086.6" fill="none" stroke="#d0d0d0" stroke-width="1.9" stroke-linejoin="round"/><polyline points="1176.0,1035.8 1289.7,1119.2 1410.6,1147.0 1532.5,1129.6 1659.1,1141.6 1784.6,1225.6 1907.5,1094.0 2029.2,1216.9 2157.6,1268.0 2277.0,1188.3" fill="none" stroke="#d0d0d0" stroke-width="1.9" stroke-linejoin="round"/><polyline points="1176.0,1035.8 1289.7,1083.0 1410.6,1187.0 1532.5,1081.0 1659.1,1105.7 1784.6,1203.2 1907.5,1093.6 2029.2,1182.5 2157.6,1253.8 2277.0,1143.8" fill="none" stroke="#d0d0d0" stroke-width="1.9" stroke-linejoin="round"/><polyline points="1176.0,1035.8 1289.7,1035.8 1410.6,1139.0 1532.5,991.0 1659.1,1018.6 1784.6,1045.4 1907.5,1043.3 2029.2,1026.4 2157.6,1056.8 2277.0,1039.9" fill="none" stroke="#d0d0d0" stroke-width="1.9" stroke-linejoin="round"/><polyline points="1176.0,1035.8 1289.7,983.5 1410.6,1054.7 1532.5,958.8 1659.1,1029.0 1784.6,1063.1 1907.5,944.6 2029.2,1042.8 2157.6,1095.0 2277.0,1025.6" fill="none" stroke="#7a40d2" stroke-width="2.5" stroke-linejoin="miter"/><polyline points="1176.0,1035.8 1289.7,919.6 1410.6,965.6 1532.5,916.6 1659.1,1003.8 1784.6,1077.6 1907.5,1036.1 2029.2,941.8 2157.6,1036.0 2277.0,999.1" fill="none" stroke="#c4e8f8" stroke-width="8.2" stroke-linejoin="miter"/><polyline points="1176.0,1035.8 1289.7,919.6 1410.6,965.6 1532.5,916.6 1659.1,1003.8 1784.6,1077.6 1907.5,1036.1 2029.2,941.8 2157.6,1036.0 2277.0,999.1" fill="none" stroke="#1c789c" stroke-width="2.1" stroke-linejoin="miter"/><path d="M1176 476.2H2277" stroke="#a8a8a8" stroke-width="2" fill="none"/><circle cx="1175.8" cy="476.2" r="13.2" fill="#fff" stroke="#727272" stroke-width="2.0"/><circle cx="1175.8" cy="476.2" r="8.7" fill="#fff" stroke="#727272" stroke-width="2.2"/><path d="M1175.8 470.9V476.2L1179.7 478.3" stroke="#727272" stroke-width="2.0" fill="none" stroke-linecap="round" stroke-linejoin="round"/><circle cx="1289.9" cy="476.2" r="9.8" fill="#fff" stroke="#727272" stroke-width="2.3"/><path d="M1289.9 470.9V476.2L1293.8000000000002 478.3" stroke="#727272" stroke-width="2.0" fill="none" stroke-linecap="round" stroke-linejoin="round"/><circle cx="1532.9" cy="476.2" r="9.8" fill="#fff" stroke="#727272" stroke-width="2.3"/><path d="M1532.9 470.9V476.2L1536.8000000000002 478.3" stroke="#727272" stroke-width="2.0" fill="none" stroke-linecap="round" stroke-linejoin="round"/><circle cx="2029.3" cy="476.2" r="9.8" fill="#fff" stroke="#727272" stroke-width="2.3"/><path d="M2029.3 470.9V476.2L2033.2 478.3" stroke="#727272" stroke-width="2.0" fill="none" stroke-linecap="round" stroke-linejoin="round"/><rect x="2265.6" y="464.9" width="22.8" height="22.6" rx="4.2" fill="#fff" stroke="#727272" stroke-width="2.2"/><rect x="2269.1" y="468.3" width="15.8" height="15.8" rx="1.8" fill="#fff" stroke="#727272" stroke-width="2.4"/><path d="M2277 470.9V476.2L2280.9 478.3" stroke="#727272" stroke-width="2.0" fill="none" stroke-linecap="round" stroke-linejoin="round"/></svg>
<div class="b" style="left:1171.40px;top:458.60px;width:0;height:0;transform-origin:0 0;transform:rotate(-41.5deg);">
<div class="t" style="left:0.60px;top:-33.20px;font-size:15px;line-height:15px;color:#1d1d1d;transform:scaleX(1.0873);">Little Northpool</div>
<div class="t" style="left:0.00px;top:-12.70px;font-size:15px;line-height:15px;color:#1d1d1d;transform:scaleX(1.0567);">2967392739701937680</div>
</div>
<div class="b" style="left:1292.50px;top:458.60px;width:0;height:0;transform-origin:0 0;transform:rotate(-41.5deg);">
<div class="t" style="left:0.60px;top:-33.20px;font-size:15px;line-height:15px;color:#1d1d1d;letter-spacing:0.020px;transform:scaleX(1.1000);">Oxley College</div>
<div class="t" style="left:0.00px;top:-12.70px;font-size:15px;line-height:15px;color:#1d1d1d;transform:scaleX(1.0567);">2967392739701937680</div>
</div>
<div class="b" style="left:1536.00px;top:460.40px;width:0;height:0;transform-origin:0 0;transform:rotate(-41.5deg);">
<div class="t" style="left:0.60px;top:-33.20px;font-size:15px;line-height:15px;color:#1d1d1d;letter-spacing:0.260px;transform:scaleX(1.1000);">Abbot’s Green</div>
<div class="t" style="left:0.00px;top:-12.70px;font-size:15px;line-height:15px;color:#1d1d1d;transform:scaleX(1.0563);">12345678</div>
</div>
<div class="b" style="left:2029.40px;top:459.90px;width:0;height:0;transform-origin:0 0;transform:rotate(-41.5deg);">
<div class="t" style="left:0.60px;top:-33.20px;font-size:15px;line-height:15px;color:#1d1d1d;letter-spacing:0.038px;transform:scaleX(1.1000);">Denton Road</div>
<div class="t" style="left:0.00px;top:-12.70px;font-size:15px;line-height:15px;color:#1d1d1d;transform:scaleX(1.0563);">12345678</div>
</div>
<div class="b" style="left:2274.60px;top:459.90px;width:0;height:0;transform-origin:0 0;transform:rotate(-41.5deg);">
<div class="t" style="left:0.60px;top:-33.20px;font-size:15px;line-height:15px;color:#1d1d1d;letter-spacing:0.162px;transform:scaleX(1.1000);">Kinbury Hospital</div>
<div class="t" style="left:0.00px;top:-12.70px;font-size:15px;line-height:15px;color:#1d1d1d;transform:scaleX(1.0563);">12345678</div>
</div>
<div class="t" style="left:1104.10px;top:493.33px;font-size:14.5px;line-height:14.5px;color:#2a2a2a;letter-spacing:-0.550px;transform:scaleX(0.9300);">10</div>
<div class="t" style="left:1108.80px;top:761.53px;font-size:14.5px;line-height:14.5px;color:#2a2a2a;transform:scaleX(0.9796);">5</div>
<div class="t" style="left:1109.30px;top:1031.43px;font-size:14.5px;line-height:14.5px;color:#8a8a8a;letter-spacing:-0.108px;transform:scaleX(0.9300);">0</div>
<div class="t" style="left:1100.50px;top:1299.83px;font-size:14.5px;line-height:14.5px;color:#2a2a2a;letter-spacing:0.917px;transform:scaleX(1.1000);">-5</div>
<div class="t" style="left:1095.90px;top:1572.53px;font-size:14.5px;line-height:14.5px;color:#2a2a2a;transform:scaleX(0.9925);">-10</div>
<div class="b" style="left:1073.30px;top:1076.50px;width:0;height:0;transform-origin:0 0;transform:rotate(-90deg);">
<div class="t" style="left:0.00px;top:-12.70px;font-size:15px;line-height:15px;color:#1d1d1d;-webkit-text-stroke:0.18px #1d1d1d;transform:scaleX(1.0570);">SEGMENT DELTA (MINS)</div>
</div>
</div></div>
<svg id="anno" width="2592" height="1657" viewBox="0 0 2592 1657"><path d="M2284.6 506.4H2310.3V915.8H2284.6" stroke="#ec9a3c" stroke-width="2.9" fill="none" stroke-linecap="round"/><path d="M2310.3 696.9H2412.7" stroke="#ec9a3c" stroke-width="2.9" fill="none"/><rect x="2411.7" y="695" width="88.30000000000018" height="4" fill="#ec9a3c" shape-rendering="crispEdges"/><path d="M2284.6 935.4H2310.3V1147.5H2284.6" stroke="#ec9a3c" stroke-width="2.9" fill="none" stroke-linecap="round"/><path d="M2310.3 1038.0H2412.7" stroke="#ec9a3c" stroke-width="2.9" fill="none"/><rect x="2411.7" y="1036" width="88.30000000000018" height="4" fill="#ec9a3c" shape-rendering="crispEdges"/><path d="M2284.6 1167.0H2310.3V1570.1H2284.6" stroke="#ec9a3c" stroke-width="2.9" fill="none" stroke-linecap="round"/><path d="M2310.3 1351.0H2412.7" stroke="#ec9a3c" stroke-width="2.9" fill="none"/><rect x="2411.7" y="1349" width="88.30000000000018" height="4" fill="#ec9a3c" shape-rendering="crispEdges"/><circle cx="2544.8" cy="696.5" r="49.25" fill="#ec9a3c" shape-rendering="crispEdges"/><polygon points="2549.9,678.9 2543.3,678.9 2533.9,685.7 2533.9,691.0 2541.7,687.4 2541.7,713.6 2549.9,713.6" fill="#fff"/><circle cx="2544.8" cy="1037.9" r="49.25" fill="#ec9a3c" shape-rendering="crispEdges"/><text x="2544.4" y="1054.8000000000002" text-anchor="middle" font-family="Liberation Sans, sans-serif" font-weight="700" font-size="47" fill="#fff">2</text><circle cx="2544.8" cy="1351.4" r="49.25" fill="#ec9a3c" shape-rendering="crispEdges"/><text x="2544.4" y="1368.3000000000002" text-anchor="middle" font-family="Liberation Sans, sans-serif" font-weight="700" font-size="47" fill="#fff">3</text></svg>
</body></html>
